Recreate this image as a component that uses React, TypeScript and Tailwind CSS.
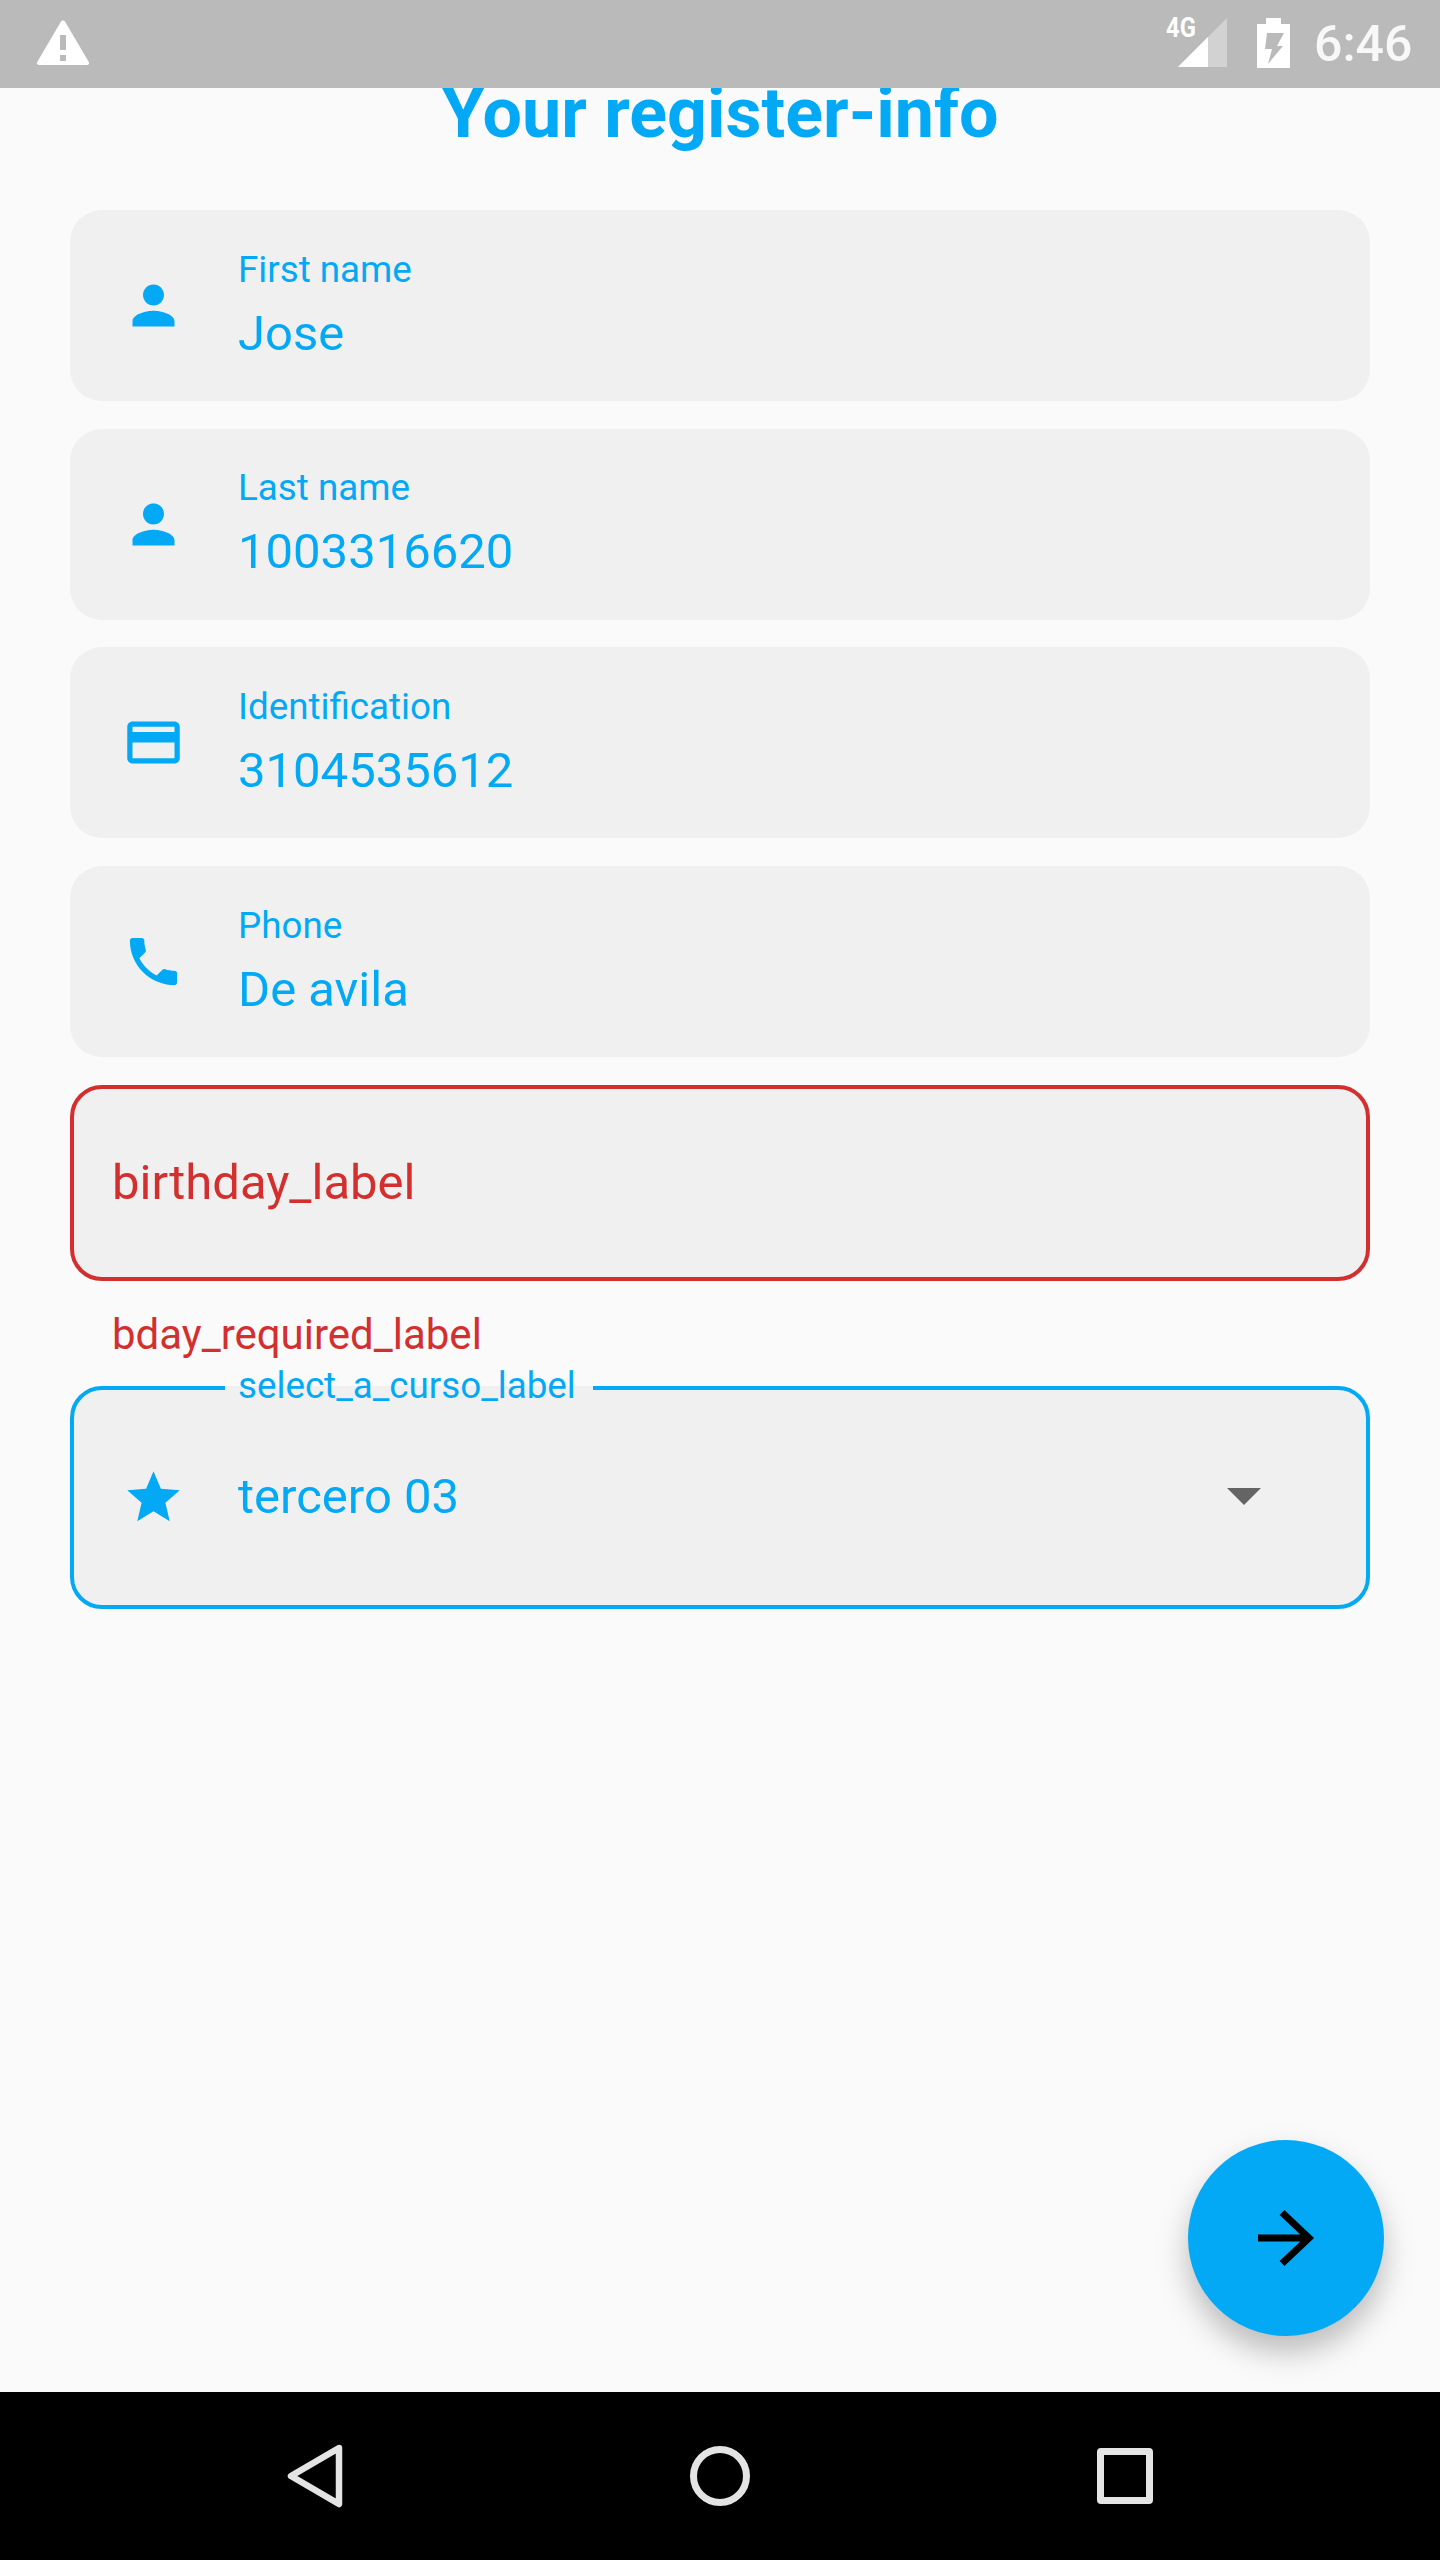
const paths = {
  person: "M12 12c2.21 0 4-1.79 4-4s-1.79-4-4-4-4 1.79-4 4 1.79 4 4 4zm0 2c-2.67 0-8 1.34-8 4v2h16v-2c0-2.66-5.33-4-8-4z",
  card: "M20 4H4c-1.11 0-1.99.89-1.99 2L2 18c0 1.11.89 2 2 2h16c1.11 0 2-.89 2-2V6c0-1.11-.89-2-2-2zm0 14H4v-6h16v6zm0-10H4V6h16v2z",
  phone: "M6.62 10.79c1.44 2.83 3.76 5.14 6.59 6.59l2.2-2.2c.27-.27.67-.36 1.02-.24 1.12.37 2.33.57 3.57.57.55 0 1 .45 1 1V20c0 .55-.45 1-1 1-9.39 0-17-7.61-17-17 0-.55.45-1 1-1h3.5c.55 0 1 .45 1 1 0 1.25.2 2.45.57 3.57.11.35.03.74-.25 1.02l-2.2 2.2z",
  star: "M12 17.27L18.18 21l-1.64-7.03L22 9.24l-7.19-.61L12 2 9.19 8.63 2 9.24l5.46 4.73L5.82 21z",
};

function Icon({ d }: { d: string }) {
  return (
    <svg viewBox="0 0 24 24" className="w-[63px] h-[63px] shrink-0 fill-[#03a9f4]">
      <path d={d} />
    </svg>
  );
}

function Field({ icon, label, value }: { icon: string; label: string; value: string }) {
  return (
    <div className="h-[191px] rounded-[32px] bg-[#f0f0f0] flex items-center pl-[52px] gap-[53px] text-[#03a9f4]">
      <Icon d={icon} />
      <div className="flex flex-col">
        <span className="text-[36.75px] leading-[42px] -mt-[1px]">{label}</span>
        <span className="text-[49px] leading-[56px] mt-[15px]">{value}</span>
      </div>
    </div>
  );
}

export default function App() {
  return (
    <div className="w-[1440px] h-[2560px] flex flex-col bg-[#fafafa] overflow-hidden font-['Roboto',sans-serif]">
      {/* status bar */}
      <div className="h-[88px] shrink-0 bg-[#bababa] flex items-center pl-[36px] pr-[28px] relative z-10">
        <svg viewBox="0 0 54 48" className="w-[54px] h-[48px] -mt-[2px]">
          <path d="M27 1.5c1 0 1.7.5 2.3 1.5l23.5 40c.8 1.6-.1 3-1.8 3H3c-1.7 0-2.6-1.4-1.8-3L24.7 3c.6-1 1.3-1.5 2.3-1.5z" fill="#fff" />
          <rect x="24" y="16" width="6" height="15" fill="#bababa" />
          <rect x="24" y="36" width="6" height="6" fill="#bababa" />
        </svg>
        <div className="ml-auto flex items-center">
          <div className="relative w-[62px] h-[50px] -mt-[2px]">
            <span className="absolute left-0 top-[-6px] text-[28px] leading-[32px] font-bold text-white origin-left scale-x-[0.85] whitespace-nowrap">4G</span>
            <svg viewBox="0 0 49 49" className="absolute left-[12px] top-[0px] w-[49px] h-[49px]">
              <path d="M49 0V49H0z" fill="#d2d2d2" />
              <path d="M30 19V49H0z" fill="#fff" />
            </svg>
          </div>
          <svg viewBox="0 0 33 50" className="w-[33px] h-[50px] ml-[29px] -mt-[2px]">
            <path d="M9 0h15v6h9v44H0V6h9z" fill="#fff" />
            <path d="M10 15h17l-7 13h6L11 46l4-15H8z" fill="#bababa" />
          </svg>
          <span className="ml-[24px] text-[50px] leading-[56px] font-medium text-[#f8f8f8] w-[98px] whitespace-nowrap">6:46</span>
        </div>
      </div>

      {/* content */}
      <div className="flex-1 relative flex flex-col px-[70px]">
        <h1 className="h-[50px] leading-[50px] mb-[72px] text-center text-[70px] font-bold text-[#03a9f4] whitespace-nowrap">
          Your register-info
        </h1>
        <div className="flex flex-col gap-[27.7px]">
          <Field icon={paths.person} label="First name" value="Jose" />
          <Field icon={paths.person} label="Last name" value="1003316620" />
          <Field icon={paths.card} label="Identification" value="3104535612" />
          <Field icon={paths.phone} label="Phone" value="De avila" />
          <div className="h-[196px] rounded-[32px] border-[4px] border-[#d32f2f] bg-[#f0f0f0] flex items-center pl-[38px] text-[49px] text-[#d32f2f]">
            birthday_label
          </div>
        </div>
        <div className="h-[105px] pl-[42px] pt-[30px] text-[42px] leading-[48px] text-[#d32f2f]">bday_required_label</div>
        <div className="relative h-[223px] rounded-[32px] border-[4px] border-[#03a9f4] bg-[#f0f0f0] flex items-center pl-[48px] text-[#03a9f4]">
          <Icon d={paths.star} />
          <span className="ml-[53px] text-[49px] -mt-[2px]">tercero 03</span>
          <svg viewBox="0 0 34 17" className="absolute left-[1153px] top-[98px] w-[34px] h-[17px]">
            <path d="M0 0h34L17 17z" fill="#646464" />
          </svg>
          <span className="absolute left-[151px] -top-[4px] w-[368px] h-[4px] bg-[#f0f0f0]" />
          <span className="absolute left-[164px] -top-[24px] text-[36.75px] leading-[40px] whitespace-nowrap">select_a_curso_label</span>
        </div>

        <button className="absolute left-[1188px] top-[2052px] w-[196px] h-[196px] rounded-full bg-[#03a9f4] flex items-center justify-center shadow-[0_16px_30px_rgba(0,0,0,0.25)]">
          <svg viewBox="0 0 60 60" className="w-[60px] h-[60px]">
            <path d="M2 30H54M26 4.5L53 30L26 55.5" fill="none" stroke="#000" strokeWidth="7" />
          </svg>
        </button>
      </div>

      {/* nav bar */}
      <div className="h-[168px] shrink-0 bg-black relative flex items-center justify-center">
        <div className="w-[866px] flex items-center justify-between">
          <svg viewBox="0 0 56 64" className="w-[56px] h-[64px]">
            <path d="M52 4L4 32l48 28z" fill="none" stroke="#e4e4e4" strokeWidth="6.5" strokeLinejoin="round" />
          </svg>
          <div className="w-[60px] h-[60px] rounded-full border-[7px] border-[#e4e4e4]" />
          <div className="w-[56px] h-[56px] rounded-[4px] border-[7px] border-[#e4e4e4]" />
        </div>
      </div>
    </div>
  );
}
